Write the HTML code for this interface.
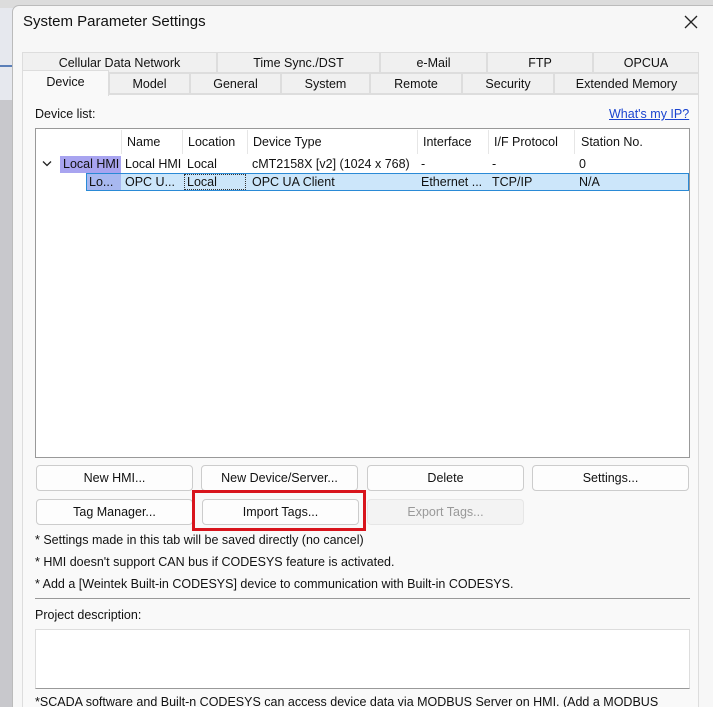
<!DOCTYPE html>
<html style="overflow:hidden"><head><style>
*{box-sizing:border-box;margin:0;padding:0}
html,body{width:713px;height:707px;overflow:hidden}
body{background:#e6e8ee;font-family:"Liberation Sans",sans-serif;font-size:12.5px;color:#111;position:relative}
.abs{position:absolute}
.dlg{left:12px;top:5px;width:710px;height:720px;background:#f7f7f7;border:1px solid #bbb;border-radius:7px}
.tab{position:absolute;height:21px;border:1px solid #ddd;background:#f0f0f0;text-align:center;line-height:20px;font-size:12.5px}
.btn{position:absolute;height:26px;border:1px solid #ccc;border-radius:4px;background:#fdfdfd;text-align:center;line-height:24px}
.t{position:absolute;white-space:nowrap}
</style></head><body>
<div class="abs" style="left:0;top:0;width:713px;height:8px;background:#dcdcdc"></div>
<div class="abs" style="left:0;top:65px;width:12px;height:2px;background:#5b7fb8"></div>
<div class="abs" style="left:0;top:100px;width:12px;height:607px;background:#c8c8cc"></div>
<div class="abs dlg"></div>
<div class="t" style="left:23px;top:13px;font-size:15px">System Parameter Settings</div>
<svg class="abs" style="left:684px;top:15px" width="14" height="14"><path d="M1 1L13 13M13 1L1 13" stroke="#222" stroke-width="1.3"/></svg>
<div class="tab" style="left:22px;top:52px;width:195px">Cellular Data Network</div>
<div class="tab" style="left:217px;top:52px;width:163px">Time Sync./DST</div>
<div class="tab" style="left:380px;top:52px;width:107px">e-Mail</div>
<div class="tab" style="left:487px;top:52px;width:106px">FTP</div>
<div class="tab" style="left:593px;top:52px;width:106px">OPCUA</div>
<div class="tab" style="left:109px;top:73px;width:81px">Model</div>
<div class="tab" style="left:190px;top:73px;width:91px">General</div>
<div class="tab" style="left:281px;top:73px;width:89px">System</div>
<div class="tab" style="left:370px;top:73px;width:92px">Remote</div>
<div class="tab" style="left:462px;top:73px;width:92px">Security</div>
<div class="tab" style="left:554px;top:73px;width:145px">Extended Memory</div>
<div class="abs" style="left:22px;top:94px;width:677px;height:620px;background:#f9f9f9;border:1px solid #ddd"></div>
<div class="abs" style="left:22px;top:70px;width:87px;height:26px;background:#f9f9f9;border:1px solid #ddd;border-bottom:none;text-align:center;line-height:22px">Device</div>
<div class="t" style="left:35px;top:107px">Device list:</div>
<div class="t" style="left:609px;top:107px;color:#1a44d0;text-decoration:underline">What's my IP?</div>
<div class="abs" style="left:35px;top:128px;width:655px;height:330px;background:#fff;border:1px solid #999"></div>
<div class="t" style="left:127px;top:135px">Name</div>
<div class="t" style="left:188px;top:135px">Location</div>
<div class="t" style="left:253px;top:135px">Device Type</div>
<div class="t" style="left:423px;top:135px">Interface</div>
<div class="t" style="left:494px;top:135px">I/F Protocol</div>
<div class="t" style="left:581px;top:135px">Station No.</div>
<div class="abs" style="left:121px;top:130px;width:1px;height:24px;background:#e6e6e6"></div>
<div class="abs" style="left:182px;top:130px;width:1px;height:24px;background:#e6e6e6"></div>
<div class="abs" style="left:247px;top:130px;width:1px;height:24px;background:#e6e6e6"></div>
<div class="abs" style="left:417px;top:130px;width:1px;height:24px;background:#e6e6e6"></div>
<div class="abs" style="left:488px;top:130px;width:1px;height:24px;background:#e6e6e6"></div>
<div class="abs" style="left:574px;top:130px;width:1px;height:24px;background:#e6e6e6"></div>
<svg class="abs" style="left:42px;top:160px" width="10" height="8"><path d="M1 1.5L5 5.5L9 1.5" stroke="#222" stroke-width="1.3" fill="none"/></svg>
<div class="abs" style="left:60px;top:156px;width:61px;height:17px;background:#a8a4f0"></div>
<div class="t" style="left:63px;top:157px">Local HMI</div>
<div class="t" style="left:125px;top:157px">Local HMI</div>
<div class="t" style="left:187px;top:157px">Local</div>
<div class="t" style="left:252px;top:157px">cMT2158X [v2] (1024 x 768)</div>
<div class="t" style="left:421px;top:157px">-</div>
<div class="t" style="left:492px;top:157px">-</div>
<div class="t" style="left:579px;top:157px">0</div>
<div class="abs" style="left:86px;top:173px;width:603px;height:18px;background:#cce6fa;border:1px solid #2a8ad6"></div>
<div class="abs" style="left:87px;top:174px;width:34px;height:16px;background:#a8b8f0"></div>
<div class="t" style="left:89px;top:175px">Lo...</div>
<div class="t" style="left:125px;top:175px">OPC U...</div>
<div class="abs" style="left:184px;top:174px;width:62px;height:16px;border:1px dotted #333"></div>
<div class="t" style="left:187px;top:175px">Local</div>
<div class="t" style="left:252px;top:175px">OPC UA Client</div>
<div class="t" style="left:421px;top:175px">Ethernet ...</div>
<div class="t" style="left:492px;top:175px">TCP/IP</div>
<div class="t" style="left:579px;top:175px">N/A</div>
<div class="btn" style="left:36px;top:465px;width:157px">New HMI...</div>
<div class="btn" style="left:201px;top:465px;width:157px">New Device/Server...</div>
<div class="btn" style="left:367px;top:465px;width:157px">Delete</div>
<div class="btn" style="left:532px;top:465px;width:157px">Settings...</div>
<div class="btn" style="left:36px;top:499px;width:157px">Tag Manager...</div>
<div class="btn" style="left:202px;top:499px;width:157px">Import Tags...</div>
<div class="btn" style="left:367px;top:499px;width:157px;color:#999;background:#f3f3f3;border-color:#e6e6e6">Export Tags...</div>
<div class="abs" style="left:192px;top:490px;width:174px;height:41px;border:3px solid #d8141c"></div>
<div class="t" style="left:35px;top:533px">* Settings made in this tab will be saved directly (no cancel)</div>
<div class="t" style="left:35px;top:555px">* HMI doesn't support CAN bus if CODESYS feature is activated.</div>
<div class="t" style="left:35px;top:577px">* Add a [Weintek Built-in CODESYS] device to communication with Built-in CODESYS.</div>
<div class="abs" style="left:35px;top:598px;width:655px;height:1px;background:#999"></div>
<div class="t" style="left:35px;top:608px">Project description:</div>
<div class="abs" style="left:35px;top:629px;width:655px;height:60px;background:#fff;border:1px solid #ddd;border-bottom-color:#999"></div>
<div class="t" style="left:35px;top:695px">*SCADA software and Built-n CODESYS can access device data via MODBUS Server on HMI. (Add a MODBUS</div>
</body></html>
